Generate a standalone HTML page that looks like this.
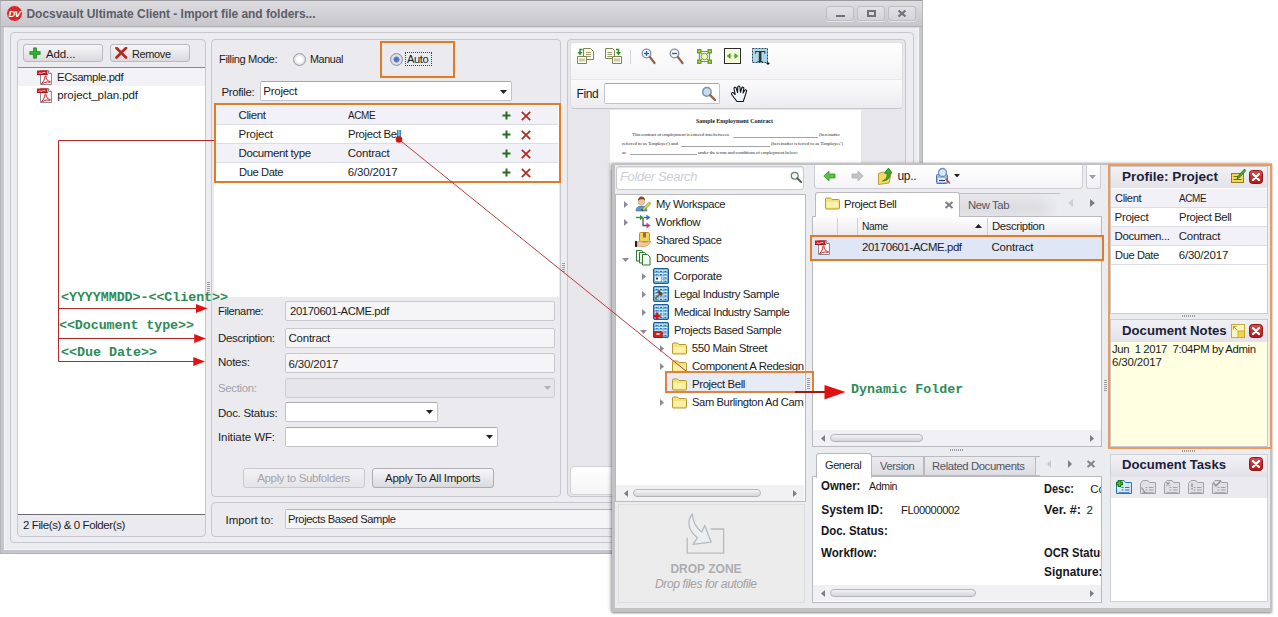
<!DOCTYPE html>
<html lang="en"><head><meta charset="utf-8"><title>Docsvault Ultimate Client - Import file and folders</title>
<style>
html,body{margin:0;padding:0}
body{width:1278px;height:617px;position:relative;overflow:hidden;background:#fff;font-family:'Liberation Sans',sans-serif;font-size:11px;color:#1c1c1c}
div,span.t,svg{position:absolute;box-sizing:border-box}
span.t{white-space:pre;display:block}

</style></head><body>
<div style="left:0px;top:0px;width:923px;height:553.5px;background:#c5c7cd;border:1px solid #b4b6bc;border-top-color:#9c9ca0;border-bottom-color:#b0b2b8"></div>
<div style="left:1px;top:1px;width:921px;height:26px;background:linear-gradient(#dedee2,#d3d3d7 45%,#c7c7cb);border-bottom:1px solid #b2b2b6"></div>
<div style="left:4px;top:27px;width:915px;height:523px;background:#ebecf0;border:1px solid #f6f6f8;border-top-color:#dcdce0"></div>
<svg style="left:6px;top:5px;" width="17" height="17" viewBox="0 0 17 17"><circle cx="8.500" cy="8.500" r="8" fill="#d32a2e" stroke="#f2d4d4" stroke-width="1"/><text x="8.300" y="12" font-family="Liberation Sans, sans-serif" font-size="9.500" font-weight="bold" font-style="italic" fill="#fff" text-anchor="middle" letter-spacing="-0.800">DV</text></svg>
<span class="t" style="left:26.5px;top:5px;height:18px;line-height:18px;font-size:12px;font-weight:bold;color:#5d5d6a;letter-spacing:-0.045px;">Docsvault Ultimate Client - Import file and folders...</span>
<div style="left:826px;top:6px;width:28px;height:15px;border:1px solid #bdbdc3;border-radius:3px;background:linear-gradient(#e2e2e6,#d3d3d8);box-shadow:0 1px 0 rgba(255,255,255,.5)"></div>
<div style="left:857px;top:6px;width:28px;height:15px;border:1px solid #bdbdc3;border-radius:3px;background:linear-gradient(#e2e2e6,#d3d3d8);box-shadow:0 1px 0 rgba(255,255,255,.5)"></div>
<div style="left:888px;top:6px;width:28px;height:15px;border:1px solid #bdbdc3;border-radius:3px;background:linear-gradient(#e2e2e6,#d3d3d8);box-shadow:0 1px 0 rgba(255,255,255,.5)"></div>
<div style="left:836px;top:15px;width:9px;height:2px;background:#70707a"></div>
<div style="left:867px;top:10px;width:9px;height:7px;border:2px solid #70707a"></div>
<svg style="left:897px;top:9px;" width="10" height="9" viewBox="0 0 10 9"><path d="M1.500 1.500L8.500 7.500M8.500 1.500L1.500 7.500" stroke="#70707a" stroke-width="2.200"/></svg>
<div style="left:10px;top:32px;width:904px;height:511px;border:1px solid #c6c8ce;border-radius:4px;background:#ededf1"></div>
<div style="left:17px;top:39px;width:189px;height:498px;border:1px solid #c6c8ce;border-radius:4px;background:#ebebef"></div>
<div style="left:23px;top:44px;width:80px;height:18px;border:1px solid #b9b9bf;border-radius:3px;background:linear-gradient(#f6f6f8,#e9e9ed 50%,#dadade)"></div>
<div style="left:110px;top:44px;width:80px;height:18px;border:1px solid #b9b9bf;border-radius:3px;background:linear-gradient(#f6f6f8,#e9e9ed 50%,#dadade)"></div>
<svg style="left:29px;top:47px;" width="12" height="12" viewBox="0 0 12 12"><path d="M6 0.500v11M0.500 6h11" stroke="#157a15" stroke-width="3.600"/><path d="M6 1.300v9.400M1.300 6h9.400" stroke="#2fb52f" stroke-width="2"/></svg>
<span class="t" style="left:46px;top:45.5px;height:16px;line-height:16px;font-size:11.5px;letter-spacing:-0.113px;">Add...</span>
<svg style="left:115px;top:47px;" width="13" height="12" viewBox="0 0 13 12"><path d="M1.500 1L11 10.500M11 1L1.500 10.500" stroke="#b52a20" stroke-width="2.700" stroke-linecap="round"/></svg>
<span class="t" style="left:132.4px;top:45.5px;height:16px;line-height:16px;font-size:11.5px;letter-spacing:-0.403px;transform:scaleX(0.9555);transform-origin:0 50%;">Remove</span>
<div style="left:18px;top:67px;width:187px;height:448px;background:#fff;border-top:1px solid #8a8a90;border-bottom:1px solid #6c6c72"></div>
<div style="left:18px;top:68px;width:187px;height:18px;background:#f3f3f7"></div>
<svg style="left:37px;top:69px;" width="16" height="17" viewBox="0 0 16 17"><path d="M3.5 1.5h8l3 3v11h-11z" fill="#fff" stroke="#8c8c90" stroke-width="1"/><path d="M11.5 1.5v3h3" fill="#e8e8ec" stroke="#8c8c90" stroke-width="1"/><rect x="0" y="1.500" width="10.500" height="4.500" fill="#d8151c"/><rect x="0" y="5" width="10.500" height="1" fill="#a80f14"/><path d="M1.5 4.5c1.5-1.5 2.5 0.5 4-0.5s2-0.5 3 0" stroke="#fff" stroke-width="0.8" fill="none"/><path d="M5 14c1.5-1.5 2.8-4 3-6.5c0.1-1 1-1 1 0c0 2.5 1.5 4.5 4 5c0.8 0.2 0.6 1-0.2 0.8c-2.5-0.6-5-0.4-7.300 1.300c-0.800 0.600-1.200 0-0.500-0.600z" fill="none" stroke="#d8151c" stroke-width="1"/></svg>
<svg style="left:37px;top:87px;" width="16" height="17" viewBox="0 0 16 17"><path d="M3.5 1.5h8l3 3v11h-11z" fill="#fff" stroke="#8c8c90" stroke-width="1"/><path d="M11.5 1.5v3h3" fill="#e8e8ec" stroke="#8c8c90" stroke-width="1"/><rect x="0" y="1.500" width="10.500" height="4.500" fill="#d8151c"/><rect x="0" y="5" width="10.500" height="1" fill="#a80f14"/><path d="M1.5 4.5c1.5-1.5 2.5 0.5 4-0.5s2-0.5 3 0" stroke="#fff" stroke-width="0.8" fill="none"/><path d="M5 14c1.5-1.5 2.8-4 3-6.5c0.1-1 1-1 1 0c0 2.5 1.5 4.5 4 5c0.8 0.2 0.6 1-0.2 0.8c-2.5-0.6-5-0.4-7.300 1.300c-0.800 0.600-1.200 0-0.500-0.600z" fill="none" stroke="#d8151c" stroke-width="1"/></svg>
<span class="t" style="left:57.3px;top:69px;height:16px;line-height:16px;font-size:11.5px;letter-spacing:-0.403px;transform:scaleX(0.9822);transform-origin:0 50%;">ECsample.pdf</span>
<span class="t" style="left:57.3px;top:87px;height:16px;line-height:16px;font-size:11.5px;letter-spacing:-0.076px;">project_plan.pdf</span>
<span class="t" style="left:23px;top:517px;height:16px;line-height:16px;font-size:11.5px;letter-spacing:-0.403px;">2 File(s) &amp; 0 Folder(s)</span>
<div style="left:207px;top:282px;width:3px;height:12px;background:repeating-linear-gradient(#9a9aa2 0 1px,transparent 1px 2px)"></div>
<div style="left:211px;top:39px;width:350px;height:458px;border:1px solid #c6c8ce;border-radius:4px;background:#ebebef"></div>
<span class="t" style="left:218.5px;top:51px;height:16px;line-height:16px;font-size:11.5px;letter-spacing:-0.403px;transform:scaleX(0.9690);transform-origin:0 50%;">Filling Mode:</span>
<div style="left:292.5px;top:52.5px;width:13px;height:13px;border-radius:50%;border:1.500px solid #9c9ca4;background:radial-gradient(circle,#fff 30%,#d2d2d8 80%)"></div>
<span class="t" style="left:309.8px;top:51px;height:16px;line-height:16px;font-size:11.5px;letter-spacing:-0.403px;transform:scaleX(0.9354);transform-origin:0 50%;">Manual</span>
<div style="left:380px;top:41px;width:75px;height:37px;border:2px solid #e07b26"></div>
<div style="left:389.5px;top:52.5px;width:13px;height:13px;border-radius:50%;border:1.500px solid #8c94aa;background:radial-gradient(circle,#4f70c4 0 1.800px,#7c94d2 2.800px,#e6eaf5 3.500px,#d2d7e4 5px)"></div>
<div style="left:405px;top:52px;width:27px;height:14px;border:1px dotted #404040"></div>
<span class="t" style="left:407.3px;top:51px;height:16px;line-height:16px;font-size:11.5px;letter-spacing:-0.403px;transform:scaleX(0.9704);transform-origin:0 50%;">Auto</span>
<span class="t" style="left:221.4px;top:83.5px;height:16px;line-height:16px;font-size:11.5px;letter-spacing:-0.342px;">Profile:</span>
<div style="left:260px;top:81px;width:252px;height:20px;background:#fff;border:1px solid #c3c3c9;border-top-color:#a6a6ae;border-radius:2px"></div>
<span class="t" style="left:263.3px;top:83px;height:16px;line-height:16px;font-size:11.5px;letter-spacing:-0.266px;">Project</span>
<svg style="left:499.5px;top:89.5px;" width="7" height="4" viewBox="0 0 7 4"><path d="M0 0H7L3.5 4z" fill="#202020"/></svg>
<div style="left:214px;top:103px;width:345px;height:194px;background:#fff"></div>
<div style="left:216px;top:106px;width:342px;height:19px;background:#f3f1f8;border-bottom:1px solid #dcdce6"></div>
<span class="t" style="left:238.5px;top:106.8px;height:16px;line-height:16px;font-size:11.5px;letter-spacing:-0.401px;">Client</span>
<span class="t" style="left:347.7px;top:106.8px;height:16px;line-height:16px;font-size:11.5px;letter-spacing:-0.403px;transform:scaleX(0.8618);transform-origin:0 50%;">ACME</span>
<svg style="left:502.0px;top:111.0px;" width="9" height="9" viewBox="0 0 9 9"><path d="M4.5 0.500V8.5M0.500 4.5H8.5" stroke="#24701a" stroke-width="2"/></svg>
<svg style="left:521.0px;top:110.8px;" width="10" height="10" viewBox="0 0 10 10"><path d="M0.800 0.800L9.2 9.2M9.2 0.800L0.800 9.2" stroke="#b02a1c" stroke-width="1.700"/></svg>
<div style="left:216px;top:125px;width:342px;height:19px;background:#fff;border-bottom:1px solid #dcdce6"></div>
<span class="t" style="left:238.5px;top:125.8px;height:16px;line-height:16px;font-size:11.5px;letter-spacing:-0.233px;">Project</span>
<span class="t" style="left:347.7px;top:125.8px;height:16px;line-height:16px;font-size:11.5px;letter-spacing:-0.403px;transform:scaleX(0.9917);transform-origin:0 50%;">Project Bell</span>
<svg style="left:502.0px;top:130.0px;" width="9" height="9" viewBox="0 0 9 9"><path d="M4.5 0.500V8.5M0.500 4.5H8.5" stroke="#24701a" stroke-width="2"/></svg>
<svg style="left:521.0px;top:129.8px;" width="10" height="10" viewBox="0 0 10 10"><path d="M0.800 0.800L9.2 9.2M9.2 0.800L0.800 9.2" stroke="#b02a1c" stroke-width="1.700"/></svg>
<div style="left:216px;top:144px;width:342px;height:19px;background:#f3f1f8;border-bottom:1px solid #dcdce6"></div>
<span class="t" style="left:238.5px;top:144.8px;height:16px;line-height:16px;font-size:11.5px;letter-spacing:-0.397px;">Document type</span>
<span class="t" style="left:347.7px;top:144.8px;height:16px;line-height:16px;font-size:11.5px;letter-spacing:-0.210px;">Contract</span>
<svg style="left:502.0px;top:149.0px;" width="9" height="9" viewBox="0 0 9 9"><path d="M4.5 0.500V8.5M0.500 4.5H8.5" stroke="#24701a" stroke-width="2"/></svg>
<svg style="left:521.0px;top:148.8px;" width="10" height="10" viewBox="0 0 10 10"><path d="M0.800 0.800L9.2 9.2M9.2 0.800L0.800 9.2" stroke="#b02a1c" stroke-width="1.700"/></svg>
<div style="left:216px;top:163px;width:342px;height:19px;background:#fff;border-bottom:1px solid #dcdce6"></div>
<span class="t" style="left:238.5px;top:163.8px;height:16px;line-height:16px;font-size:11.5px;letter-spacing:-0.403px;transform:scaleX(0.9721);transform-origin:0 50%;">Due Date</span>
<span class="t" style="left:347.7px;top:163.8px;height:16px;line-height:16px;font-size:11.5px;letter-spacing:-0.146px;">6/30/2017</span>
<svg style="left:502.0px;top:168.0px;" width="9" height="9" viewBox="0 0 9 9"><path d="M4.5 0.500V8.5M0.500 4.5H8.5" stroke="#24701a" stroke-width="2"/></svg>
<svg style="left:521.0px;top:167.8px;" width="10" height="10" viewBox="0 0 10 10"><path d="M0.800 0.800L9.2 9.2M9.2 0.800L0.800 9.2" stroke="#b02a1c" stroke-width="1.700"/></svg>
<div style="left:214px;top:103px;width:347px;height:80px;border:2px solid #e07b26"></div>
<div style="left:562px;top:263px;width:3px;height:10px;background:repeating-linear-gradient(#9a9aa2 0 1px,transparent 1px 2px)"></div>
<span class="t" style="left:218px;top:303px;height:16px;line-height:16px;font-size:11.5px;letter-spacing:-0.403px;transform:scaleX(0.9645);transform-origin:0 50%;">Filename:</span>
<div style="left:285px;top:301px;width:270px;height:20px;background:#f5f5f7;border:1px solid #c8c8ce;border-radius:2px"></div>
<span class="t" style="left:289.5px;top:303px;height:16px;line-height:16px;font-size:11.5px;letter-spacing:-0.403px;transform:scaleX(0.9835);transform-origin:0 50%;">20170601-ACME.pdf</span>
<span class="t" style="left:218px;top:330px;height:16px;line-height:16px;font-size:11.5px;letter-spacing:-0.338px;">Description:</span>
<div style="left:285px;top:328px;width:270px;height:20px;background:#f5f5f7;border:1px solid #c8c8ce;border-radius:2px"></div>
<span class="t" style="left:288.5px;top:330px;height:16px;line-height:16px;font-size:11.5px;letter-spacing:-0.238px;">Contract</span>
<span class="t" style="left:218px;top:354px;height:16px;line-height:16px;font-size:11.5px;letter-spacing:-0.270px;">Notes:</span>
<div style="left:285px;top:353px;width:270px;height:20px;background:#f5f5f7;border:1px solid #c8c8ce;border-radius:2px"></div>
<span class="t" style="left:288.5px;top:355.5px;height:16px;line-height:16px;font-size:11.5px;letter-spacing:-0.146px;">6/30/2017</span>
<span class="t" style="left:218px;top:380px;height:16px;line-height:16px;font-size:11.5px;color:#a2a2aa;letter-spacing:-0.380px;">Section:</span>
<div style="left:285px;top:378px;width:270px;height:20px;background:#e6e6ea;border:1px solid #cdcdd3;border-radius:2px"></div>
<svg style="left:543.5px;top:386.0px;" width="7" height="4" viewBox="0 0 7 4"><path d="M0 0H7L3.5 4z" fill="#b0b0b8"/></svg>
<span class="t" style="left:218px;top:405px;height:16px;line-height:16px;font-size:11.5px;letter-spacing:-0.276px;">Doc. Status:</span>
<div style="left:285px;top:402px;width:153px;height:20px;background:#fff;border:1px solid #c3c3c9;border-top-color:#a9a9b1;border-radius:2px"></div>
<svg style="left:425.5px;top:410.0px;" width="7" height="4" viewBox="0 0 7 4"><path d="M0 0H7L3.5 4z" fill="#202020"/></svg>
<span class="t" style="left:218px;top:429px;height:16px;line-height:16px;font-size:11.5px;letter-spacing:-0.105px;">Initiate WF:</span>
<div style="left:285px;top:427px;width:213px;height:20px;background:#fff;border:1px solid #c3c3c9;border-top-color:#a9a9b1;border-radius:2px"></div>
<svg style="left:485.5px;top:434.5px;" width="7" height="4" viewBox="0 0 7 4"><path d="M0 0H7L3.5 4z" fill="#202020"/></svg>
<div style="left:243px;top:468px;width:122px;height:20px;border:1px solid #c9c9cf;border-radius:3px;background:linear-gradient(#f2f2f4,#e4e4e8)"></div>
<span class="t" style="left:257.3px;top:470px;height:16px;line-height:16px;font-size:11.5px;color:#a4a4ac;letter-spacing:-0.374px;">Apply to Subfolders</span>
<div style="left:372px;top:468px;width:122px;height:20px;border:1px solid #adadb5;border-radius:3px;background:linear-gradient(#f6f6f8,#e9e9ed 50%,#dadade)"></div>
<span class="t" style="left:385px;top:470px;height:16px;line-height:16px;font-size:11.5px;letter-spacing:-0.278px;">Apply To All Imports</span>
<div style="left:211px;top:502px;width:696px;height:35px;border:1px solid #c6c8ce;border-radius:4px;background:#ebebef"></div>
<span class="t" style="left:225.5px;top:512px;height:16px;line-height:16px;font-size:11.5px;letter-spacing:-0.064px;">Import to:</span>
<div style="left:285px;top:509px;width:400px;height:20px;background:#f5f5f7;border:1px solid #c6c6cc;border-top-color:#b4b4ba;border-radius:2px"></div>
<span class="t" style="left:288px;top:511px;height:16px;line-height:16px;font-size:11.5px;letter-spacing:-0.403px;transform:scaleX(0.9686);transform-origin:0 50%;">Projects Based Sample</span>
<div style="left:567px;top:39px;width:339px;height:458px;border:1px solid #c6c8ce;border-radius:4px;background:#e7e7eb"></div>
<div style="left:570px;top:42px;width:333px;height:67px;border:1px solid #dedee3;border-bottom-color:#c6c6cc;border-radius:4px;background:linear-gradient(#fff,#f3f3f6 54%,#fbfbfc 57%,#ececf0)"></div>
<div style="left:571px;top:79px;width:331px;height:1px;background:#e6e6ea"></div>
<span class="t" style="left:576.5px;top:84.5px;height:18px;line-height:18px;font-size:12px;letter-spacing:-0.420px;">Find</span>
<div style="left:604px;top:83px;width:116px;height:21px;background:#fff;border:1px solid #c3c3c9;border-top-color:#a6a6ae;border-radius:2px"></div>
<svg style="left:701.0px;top:86.0px;" width="15" height="15" viewBox="0 0 14 14"><circle cx="5.500" cy="5.500" r="4" fill="#c8def0" stroke="#7c92aa" stroke-width="1.400"/><path d="M8.500 8.500L13 13" stroke="#a0604a" stroke-width="2.200" stroke-linecap="round"/></svg>
<div style="left:570px;top:465.5px;width:333px;height:29.5px;border:1px solid #d2d2d8;border-radius:4px;background:linear-gradient(#fff,#f4f4f6)"></div>
<div style="left:610px;top:110px;width:251px;height:60px;background:#fff"></div>
<span class="t" style="left:696px;top:116.5px;height:9px;line-height:9px;font-size:6px;font-weight:bold;font-family:'Liberation Serif', serif;letter-spacing:-0.040px;">Sample Employment Contract</span>
<span class="t" style="left:632px;top:131px;height:8px;line-height:8px;font-size:5px;color:#303030;font-family:'Liberation Serif', serif;letter-spacing:-0.168px;">This contract of employment is entered into between</span>
<div style="left:733px;top:137px;width:85px;height:1px;background:#a4a4a4"></div>
<span class="t" style="left:819px;top:131px;height:8px;line-height:8px;font-size:5px;color:#303030;font-family:'Liberation Serif', serif;letter-spacing:-0.175px;transform:scaleX(0.9812);transform-origin:0 50%;">(hereinafter</span>
<span class="t" style="left:622px;top:140px;height:8px;line-height:8px;font-size:5px;color:#303030;font-family:'Liberation Serif', serif;letter-spacing:-0.113px;">referred to as &#x27;Employer&#x27;) and</span>
<div style="left:681px;top:146px;width:89px;height:1px;background:#a4a4a4"></div>
<span class="t" style="left:771px;top:140px;height:8px;line-height:8px;font-size:5px;color:#303030;font-family:'Liberation Serif', serif;letter-spacing:-0.104px;">(hereinafter referred to as &#x27;Employee&#x27;)</span>
<span class="t" style="left:622px;top:148.5px;height:8px;line-height:8px;font-size:5px;color:#303030;font-family:'Liberation Serif', serif;letter-spacing:-0.172px;">as</span>
<div style="left:630px;top:154px;width:67px;height:1px;background:#a4a4a4"></div>
<span class="t" style="left:698px;top:148.5px;height:8px;line-height:8px;font-size:5px;color:#303030;font-family:'Liberation Serif', serif;letter-spacing:-0.163px;">under the terms and conditions of employment below:</span>
<svg style="left:577px;top:48px;" width="17" height="16" viewBox="0 0 17 16"><path d="M6.500 0.500h7l3 3v8h-10z" fill="#fbfbf0" stroke="#84844c" stroke-width="1"/><path d="M9 4.500h5M9 6.500h5M9 8.500h5" stroke="#84844c" stroke-width="0.800"/><path d="M0.500 8.500h9v7h-9z" fill="#fbfbf0" stroke="#84844c" stroke-width="1"/><path d="M3 10.500v3M5 10.500v3M7 10.500v3" stroke="#84844c" stroke-width="0.800"/><path d="M5.500 1.500H3v3" fill="none" stroke="#2f8c2f" stroke-width="1.500"/><path d="M0.500 4L3 7.500 5.500 4z" fill="#2f8c2f"/></svg>
<svg style="left:605px;top:48px;" width="17" height="16" viewBox="0 0 17 16"><path d="M0.500 0.500h7l2 2v8h-9z" fill="#fbfbf0" stroke="#84844c" stroke-width="1"/><path d="M2.500 4.500h4.500M2.500 6.500h4.500M2.500 8.500h4.500" stroke="#84844c" stroke-width="0.800"/><path d="M7.500 8.500h9v7h-9z" fill="#fbfbf0" stroke="#84844c" stroke-width="1"/><path d="M10 10.500v3M12 10.500v3M14 10.500v3" stroke="#84844c" stroke-width="0.800"/><path d="M11 1.500h2.500v3" fill="none" stroke="#2f8c2f" stroke-width="1.500"/><path d="M11 4L13.500 7.500 16 4z" fill="#2f8c2f"/></svg>
<div style="left:630px;top:50px;width:1px;height:14px;background:#d2d2d8"></div>
<svg style="left:640.8px;top:48px;" width="16" height="17" viewBox="0 0 16 17"><circle cx="5.500" cy="5.500" r="4.300" fill="#f3f7fb" stroke="#7d8ea6" stroke-width="1.300"/><path d="M3 5.500h5" stroke="#2d5fa8" stroke-width="1.300"/><path d="M5.500 3v5" stroke="#2d5fa8" stroke-width="1.300"/><path d="M8.800 8.800L13.500 15" stroke="#9a5c46" stroke-width="2.200" stroke-linecap="round"/></svg>
<svg style="left:669.2px;top:48px;" width="16" height="17" viewBox="0 0 16 17"><circle cx="5.500" cy="5.500" r="4.300" fill="#f3f7fb" stroke="#7d8ea6" stroke-width="1.300"/><path d="M3 5.500h5" stroke="#2d5fa8" stroke-width="1.300"/><path d="M8.800 8.800L13.500 15" stroke="#9a5c46" stroke-width="2.200" stroke-linecap="round"/></svg>
<svg style="left:697px;top:49px;" width="15" height="15" viewBox="0 0 15 15"><path d="M2.500 2.500h10v10h-10z" fill="none" stroke="#6ba31f" stroke-width="1.200"/><path d="M2.500 2.500l10 10M12.500 2.500l-10 10" stroke="#6ba31f" stroke-width="1"/><circle cx="7.500" cy="7.500" r="3.200" fill="#f4f6c8" stroke="#6ba31f" stroke-width="1"/><path d="M0 0h4.500v4.500h-4.500zM10.500 0h4.500v4.500h-4.500zM0 10.500h4.500v4.500h-4.500zM10.500 10.500h4.500v4.500h-4.500z" fill="#6ba31f"/><path d="M1.500 1.500h1.500v1.500h-1.500zM12 1.500h1.500v1.500h-1.500zM1.500 12h1.500v1.500h-1.500zM12 12h1.500v1.500h-1.500z" fill="#c8e08c"/></svg>
<svg style="left:723.5px;top:48px;" width="17" height="16" viewBox="0 0 17 16"><rect x="0.500" y="0.500" width="16" height="15" fill="#f6fbe0" stroke="#2c2c2c" stroke-width="1"/><path d="M2.500 8L6.500 5v6zM14.500 8L10.500 5v6z" fill="#4fa81f"/><path d="M6 8h1.500M9.500 8H11" stroke="#4fa81f" stroke-width="1.200"/></svg>
<svg style="left:751.5px;top:48px;" width="18" height="17" viewBox="0 0 18 17"><rect x="0.500" y="0.500" width="15" height="14" fill="#a9d9ee" stroke="#2c4658" stroke-width="1" stroke-dasharray="2 1"/><text x="8" y="13.500" text-anchor="middle" font-family="Liberation Serif, serif" font-weight="bold" font-size="16" fill="#1f3446">T</text><path d="M14.500 15.500h3M16 14v3" stroke="#101010" stroke-width="1"/></svg>
<svg style="left:730px;top:85px;" width="18" height="18" viewBox="0 0 18 18"><path d="M7 16.500L2 10C0.800 8.500 2 7 3.500 7.800L5.200 9.500 4 4C3.700 2 5.800 1.800 6.200 3.200L7.600 7.500 7.700 2.200C7.800 0.600 9.800 0.600 10 2.200L10.400 7.300 11.800 3C12.300 1.600 14.100 2.200 13.800 3.600L13 8 14.800 5.200C15.500 4.200 17 5 16.500 6.300C15.500 9.500 14.500 13 13.200 16.500Z" fill="#eef4fa" stroke="#101018" stroke-width="1.100" stroke-linejoin="round"/></svg>
<div style="left:612px;top:163px;width:660px;height:449px;background:#ebecf0;border-style:solid;border-color:#c2c2c5;border-width:2px 2px 4px 3px;box-shadow:0 1px 2px rgba(0,0,0,.4),-2px 0 3px rgba(0,0,0,.22)"></div>
<div style="left:616px;top:166px;width:188px;height:24px;background:#fff;border:1px solid #c8c8ce;border-radius:3px;box-shadow:inset 0 1px 1px #e8e8ec"></div>
<span class="t" style="left:620px;top:166.5px;height:20px;line-height:20px;font-size:13px;color:#cdcdd5;font-style:italic;letter-spacing:-0.346px;">Folder Search</span>
<svg style="left:790.0px;top:171.0px;" width="12" height="12" viewBox="0 0 14 14"><circle cx="5.500" cy="5.500" r="4" fill="#f4f8f4" stroke="#6c7c74" stroke-width="1.400"/><path d="M8.500 8.500L13 13" stroke="#4c5c54" stroke-width="2.200" stroke-linecap="round"/></svg>
<div style="left:615px;top:194px;width:191px;height:308px;background:#fff;border:1px solid #b9b9bf"></div>
<div style="left:616px;top:195px;width:188px;height:290px;overflow:hidden">
<svg style="left:7.5px;top:5.5px;" width="4" height="7" viewBox="0 0 4 7"><path d="M0 0V7L4 3.5z" fill="#8c8c94"/></svg>
<svg style="left:19px;top:1px;" width="16" height="16" viewBox="0 0 16 16"><path d="M1 15c0-3.500 2-5 5.500-5s5.500 1.500 5.500 5z" fill="#5c96cc" stroke="#3c6ea4" stroke-width="0.600"/><circle cx="6.500" cy="5.500" r="3.300" fill="#f0c49c" stroke="#b88c64" stroke-width="0.500"/><path d="M3 5c0-3 1.500-4.500 3.500-4.500s3.500 1.500 3.500 4c-1.500-1.500-4.500-2-7 0.500z" fill="#7a4a24"/><path d="M7 15l1-3 6.500-6 1.500 1.500-6.500 6.500z" fill="#e8d054" stroke="#6c8a2c" stroke-width="0.700"/><path d="M6.500 13l1.500 2" stroke="#202020" stroke-width="0.800"/></svg>
<span class="t" style="left:39.60000000000002px;top:1px;height:16px;line-height:16px;font-size:11.5px;letter-spacing:-0.403px;transform:scaleX(0.9746);transform-origin:0 50%;">My Workspace</span>
<svg style="left:7.5px;top:23.5px;" width="4" height="7" viewBox="0 0 4 7"><path d="M0 0V7L4 3.5z" fill="#8c8c94"/></svg>
<svg style="left:19px;top:19px;" width="16" height="16" viewBox="0 0 16 16"><path d="M1 3.500h6" stroke="#2c9a3c" stroke-width="1.400"/><path d="M5 0.800L8.500 3.500 5 6.200z" fill="#2c9a3c"/><path d="M8.500 3.500h4" stroke="#2c6cc4" stroke-width="1.400"/><path d="M11.500 0.800L15.500 3.500 11.500 6.200z" fill="#2c6cc4"/><path d="M8 4v7.500h4" stroke="#5c4c5c" stroke-width="1.300" fill="none"/><path d="M11.500 8.500L15.500 11.500 11.500 14.500z" fill="#c43c8c"/></svg>
<span class="t" style="left:39.60000000000002px;top:19px;height:16px;line-height:16px;font-size:11.5px;letter-spacing:-0.297px;">Workflow</span>
<svg style="left:19px;top:37px;" width="16" height="16" viewBox="0 0 16 16"><rect x="4.500" y="0.500" width="10" height="9" rx="1" fill="#f2d45c" stroke="#b8942c"/><rect x="8" y="0.500" width="3" height="5" fill="#a8643c"/><path d="M2 10c3-1.500 5 0 7 0.500s4-1.500 6.500-1c0.500 1.500-3 4.500-6 5s-5.500-0.500-7.500-0.500z" fill="#f4c896" stroke="#c48c54" stroke-width="0.700"/><rect x="0" y="9" width="2" height="6" fill="#202020"/></svg>
<span class="t" style="left:39.60000000000002px;top:37px;height:16px;line-height:16px;font-size:11.5px;letter-spacing:-0.403px;transform:scaleX(0.9611);transform-origin:0 50%;">Shared Space</span>
<svg style="left:5.5px;top:63.0px;" width="7" height="4" viewBox="0 0 7 4"><path d="M0 0H7L3.5 4z" fill="#8c8c94"/></svg>
<svg style="left:19px;top:55px;" width="16" height="16" viewBox="0 0 16 16"><path d="M1.500 0.500h5l2.500 2.500v8h-7.500z" fill="#eef6ea" stroke="#2c7a34"/><path d="M4.500 2.500h5l2.500 2.500v8h-7.500z" fill="#eef6ea" stroke="#2c7a34"/><path d="M7.500 4.500h5l2.500 2.500v8h-7.500z" fill="#f4faf0" stroke="#2c7a34"/></svg>
<span class="t" style="left:39.60000000000002px;top:55px;height:16px;line-height:16px;font-size:11.5px;letter-spacing:-0.403px;transform:scaleX(0.9645);transform-origin:0 50%;">Documents</span>
<svg style="left:25.5px;top:77.5px;" width="4" height="7" viewBox="0 0 4 7"><path d="M0 0V7L4 3.5z" fill="#8c8c94"/></svg>
<svg style="left:37px;top:73px;" width="16" height="16" viewBox="0 0 16 16"><rect x="0.500" y="0.500" width="15" height="15" rx="1.800" fill="#3f8ccc" stroke="#205c98" stroke-width="1.100"/><rect x="1.6" y="1.7" width="4" height="2.800" fill="#a4d8f4"/><rect x="1.6" y="1.7" width="4" height="0.900" fill="#e2f4fc"/><rect x="2.6" y="2.9" width="2" height="1" fill="#1a5a9a"/><rect x="6.0" y="1.7" width="4" height="2.800" fill="#a4d8f4"/><rect x="6.0" y="1.7" width="4" height="0.900" fill="#e2f4fc"/><rect x="7.0" y="2.9" width="2" height="1" fill="#1a5a9a"/><rect x="10.4" y="1.7" width="4" height="2.800" fill="#a4d8f4"/><rect x="10.4" y="1.7" width="4" height="0.900" fill="#e2f4fc"/><rect x="11.4" y="2.9" width="2" height="1" fill="#1a5a9a"/><rect x="1.6" y="5.0" width="4" height="2.800" fill="#a4d8f4"/><rect x="1.6" y="5.0" width="4" height="0.900" fill="#e2f4fc"/><rect x="2.6" y="6.2" width="2" height="1" fill="#1a5a9a"/><rect x="6.0" y="5.0" width="4" height="2.800" fill="#a4d8f4"/><rect x="6.0" y="5.0" width="4" height="0.900" fill="#e2f4fc"/><rect x="7.0" y="6.2" width="2" height="1" fill="#1a5a9a"/><rect x="10.4" y="5.0" width="4" height="2.800" fill="#a4d8f4"/><rect x="10.4" y="5.0" width="4" height="0.900" fill="#e2f4fc"/><rect x="11.4" y="6.2" width="2" height="1" fill="#1a5a9a"/><rect x="1.6" y="8.3" width="4" height="2.800" fill="#a4d8f4"/><rect x="1.6" y="8.3" width="4" height="0.900" fill="#e2f4fc"/><rect x="2.6" y="9.5" width="2" height="1" fill="#1a5a9a"/><rect x="6.0" y="8.3" width="4" height="2.800" fill="#a4d8f4"/><rect x="6.0" y="8.3" width="4" height="0.900" fill="#e2f4fc"/><rect x="7.0" y="9.5" width="2" height="1" fill="#1a5a9a"/><rect x="10.4" y="8.3" width="4" height="2.800" fill="#a4d8f4"/><rect x="10.4" y="8.3" width="4" height="0.900" fill="#e2f4fc"/><rect x="11.4" y="9.5" width="2" height="1" fill="#1a5a9a"/><rect x="1.6" y="11.6" width="4" height="2.800" fill="#a4d8f4"/><rect x="1.6" y="11.6" width="4" height="0.900" fill="#e2f4fc"/><rect x="2.6" y="12.8" width="2" height="1" fill="#1a5a9a"/><rect x="6.0" y="11.6" width="4" height="2.800" fill="#a4d8f4"/><rect x="6.0" y="11.6" width="4" height="0.900" fill="#e2f4fc"/><rect x="7.0" y="12.8" width="2" height="1" fill="#1a5a9a"/><rect x="10.4" y="11.6" width="4" height="2.800" fill="#a4d8f4"/><rect x="10.4" y="11.6" width="4" height="0.900" fill="#e2f4fc"/><rect x="11.4" y="12.8" width="2" height="1" fill="#1a5a9a"/><rect x="1.500" y="8" width="7" height="5.500" fill="#f4f8fc" stroke="#6c9cc8" stroke-width="0.600"/><rect x="3" y="9.500" width="2" height="2" fill="#4c3c3c"/></svg>
<span class="t" style="left:57.60000000000002px;top:73px;height:16px;line-height:16px;font-size:11.5px;letter-spacing:-0.330px;">Corporate</span>
<svg style="left:25.5px;top:95.5px;" width="4" height="7" viewBox="0 0 4 7"><path d="M0 0V7L4 3.5z" fill="#8c8c94"/></svg>
<svg style="left:37px;top:91px;" width="16" height="16" viewBox="0 0 16 16"><rect x="0.500" y="0.500" width="15" height="15" rx="1.800" fill="#3f8ccc" stroke="#205c98" stroke-width="1.100"/><rect x="1.6" y="1.7" width="4" height="2.800" fill="#a4d8f4"/><rect x="1.6" y="1.7" width="4" height="0.900" fill="#e2f4fc"/><rect x="2.6" y="2.9" width="2" height="1" fill="#1a5a9a"/><rect x="6.0" y="1.7" width="4" height="2.800" fill="#a4d8f4"/><rect x="6.0" y="1.7" width="4" height="0.900" fill="#e2f4fc"/><rect x="7.0" y="2.9" width="2" height="1" fill="#1a5a9a"/><rect x="10.4" y="1.7" width="4" height="2.800" fill="#a4d8f4"/><rect x="10.4" y="1.7" width="4" height="0.900" fill="#e2f4fc"/><rect x="11.4" y="2.9" width="2" height="1" fill="#1a5a9a"/><rect x="1.6" y="5.0" width="4" height="2.800" fill="#a4d8f4"/><rect x="1.6" y="5.0" width="4" height="0.900" fill="#e2f4fc"/><rect x="2.6" y="6.2" width="2" height="1" fill="#1a5a9a"/><rect x="6.0" y="5.0" width="4" height="2.800" fill="#a4d8f4"/><rect x="6.0" y="5.0" width="4" height="0.900" fill="#e2f4fc"/><rect x="7.0" y="6.2" width="2" height="1" fill="#1a5a9a"/><rect x="10.4" y="5.0" width="4" height="2.800" fill="#a4d8f4"/><rect x="10.4" y="5.0" width="4" height="0.900" fill="#e2f4fc"/><rect x="11.4" y="6.2" width="2" height="1" fill="#1a5a9a"/><rect x="1.6" y="8.3" width="4" height="2.800" fill="#a4d8f4"/><rect x="1.6" y="8.3" width="4" height="0.900" fill="#e2f4fc"/><rect x="2.6" y="9.5" width="2" height="1" fill="#1a5a9a"/><rect x="6.0" y="8.3" width="4" height="2.800" fill="#a4d8f4"/><rect x="6.0" y="8.3" width="4" height="0.900" fill="#e2f4fc"/><rect x="7.0" y="9.5" width="2" height="1" fill="#1a5a9a"/><rect x="10.4" y="8.3" width="4" height="2.800" fill="#a4d8f4"/><rect x="10.4" y="8.3" width="4" height="0.900" fill="#e2f4fc"/><rect x="11.4" y="9.5" width="2" height="1" fill="#1a5a9a"/><rect x="1.6" y="11.6" width="4" height="2.800" fill="#a4d8f4"/><rect x="1.6" y="11.6" width="4" height="0.900" fill="#e2f4fc"/><rect x="2.6" y="12.8" width="2" height="1" fill="#1a5a9a"/><rect x="6.0" y="11.6" width="4" height="2.800" fill="#a4d8f4"/><rect x="6.0" y="11.6" width="4" height="0.900" fill="#e2f4fc"/><rect x="7.0" y="12.8" width="2" height="1" fill="#1a5a9a"/><rect x="10.4" y="11.6" width="4" height="2.800" fill="#a4d8f4"/><rect x="10.4" y="11.6" width="4" height="0.900" fill="#e2f4fc"/><rect x="11.4" y="12.8" width="2" height="1" fill="#1a5a9a"/><path d="M2 13l5-5" stroke="#8c5c2c" stroke-width="1.600"/><path d="M5 5l4 4" stroke="#6c4424" stroke-width="2.600"/></svg>
<span class="t" style="left:57.60000000000002px;top:91px;height:16px;line-height:16px;font-size:11.5px;letter-spacing:-0.403px;transform:scaleX(0.9917);transform-origin:0 50%;">Legal Industry Sample</span>
<svg style="left:25.5px;top:113.5px;" width="4" height="7" viewBox="0 0 4 7"><path d="M0 0V7L4 3.5z" fill="#8c8c94"/></svg>
<svg style="left:37px;top:109px;" width="16" height="16" viewBox="0 0 16 16"><rect x="0.500" y="0.500" width="15" height="15" rx="1.800" fill="#3f8ccc" stroke="#205c98" stroke-width="1.100"/><rect x="1.6" y="1.7" width="4" height="2.800" fill="#a4d8f4"/><rect x="1.6" y="1.7" width="4" height="0.900" fill="#e2f4fc"/><rect x="2.6" y="2.9" width="2" height="1" fill="#1a5a9a"/><rect x="6.0" y="1.7" width="4" height="2.800" fill="#a4d8f4"/><rect x="6.0" y="1.7" width="4" height="0.900" fill="#e2f4fc"/><rect x="7.0" y="2.9" width="2" height="1" fill="#1a5a9a"/><rect x="10.4" y="1.7" width="4" height="2.800" fill="#a4d8f4"/><rect x="10.4" y="1.7" width="4" height="0.900" fill="#e2f4fc"/><rect x="11.4" y="2.9" width="2" height="1" fill="#1a5a9a"/><rect x="1.6" y="5.0" width="4" height="2.800" fill="#a4d8f4"/><rect x="1.6" y="5.0" width="4" height="0.900" fill="#e2f4fc"/><rect x="2.6" y="6.2" width="2" height="1" fill="#1a5a9a"/><rect x="6.0" y="5.0" width="4" height="2.800" fill="#a4d8f4"/><rect x="6.0" y="5.0" width="4" height="0.900" fill="#e2f4fc"/><rect x="7.0" y="6.2" width="2" height="1" fill="#1a5a9a"/><rect x="10.4" y="5.0" width="4" height="2.800" fill="#a4d8f4"/><rect x="10.4" y="5.0" width="4" height="0.900" fill="#e2f4fc"/><rect x="11.4" y="6.2" width="2" height="1" fill="#1a5a9a"/><rect x="1.6" y="8.3" width="4" height="2.800" fill="#a4d8f4"/><rect x="1.6" y="8.3" width="4" height="0.900" fill="#e2f4fc"/><rect x="2.6" y="9.5" width="2" height="1" fill="#1a5a9a"/><rect x="6.0" y="8.3" width="4" height="2.800" fill="#a4d8f4"/><rect x="6.0" y="8.3" width="4" height="0.900" fill="#e2f4fc"/><rect x="7.0" y="9.5" width="2" height="1" fill="#1a5a9a"/><rect x="10.4" y="8.3" width="4" height="2.800" fill="#a4d8f4"/><rect x="10.4" y="8.3" width="4" height="0.900" fill="#e2f4fc"/><rect x="11.4" y="9.5" width="2" height="1" fill="#1a5a9a"/><rect x="1.6" y="11.6" width="4" height="2.800" fill="#a4d8f4"/><rect x="1.6" y="11.6" width="4" height="0.900" fill="#e2f4fc"/><rect x="2.6" y="12.8" width="2" height="1" fill="#1a5a9a"/><rect x="6.0" y="11.6" width="4" height="2.800" fill="#a4d8f4"/><rect x="6.0" y="11.6" width="4" height="0.900" fill="#e2f4fc"/><rect x="7.0" y="12.8" width="2" height="1" fill="#1a5a9a"/><rect x="10.4" y="11.6" width="4" height="2.800" fill="#a4d8f4"/><rect x="10.4" y="11.6" width="4" height="0.900" fill="#e2f4fc"/><rect x="11.4" y="12.8" width="2" height="1" fill="#1a5a9a"/><path d="M4 8.500v7M0.500 12h7" stroke="#d4141c" stroke-width="2.400"/></svg>
<span class="t" style="left:57.60000000000002px;top:109px;height:16px;line-height:16px;font-size:11.5px;letter-spacing:-0.403px;transform:scaleX(0.9900);transform-origin:0 50%;">Medical Industry Sample</span>
<svg style="left:23.5px;top:135.0px;" width="7" height="4" viewBox="0 0 7 4"><path d="M0 0H7L3.5 4z" fill="#8c8c94"/></svg>
<svg style="left:37px;top:127px;" width="16" height="16" viewBox="0 0 16 16"><rect x="0.500" y="0.500" width="15" height="15" rx="1.800" fill="#3f8ccc" stroke="#205c98" stroke-width="1.100"/><rect x="1.6" y="1.7" width="4" height="2.800" fill="#a4d8f4"/><rect x="1.6" y="1.7" width="4" height="0.900" fill="#e2f4fc"/><rect x="2.6" y="2.9" width="2" height="1" fill="#1a5a9a"/><rect x="6.0" y="1.7" width="4" height="2.800" fill="#a4d8f4"/><rect x="6.0" y="1.7" width="4" height="0.900" fill="#e2f4fc"/><rect x="7.0" y="2.9" width="2" height="1" fill="#1a5a9a"/><rect x="10.4" y="1.7" width="4" height="2.800" fill="#a4d8f4"/><rect x="10.4" y="1.7" width="4" height="0.900" fill="#e2f4fc"/><rect x="11.4" y="2.9" width="2" height="1" fill="#1a5a9a"/><rect x="1.6" y="5.0" width="4" height="2.800" fill="#a4d8f4"/><rect x="1.6" y="5.0" width="4" height="0.900" fill="#e2f4fc"/><rect x="2.6" y="6.2" width="2" height="1" fill="#1a5a9a"/><rect x="6.0" y="5.0" width="4" height="2.800" fill="#a4d8f4"/><rect x="6.0" y="5.0" width="4" height="0.900" fill="#e2f4fc"/><rect x="7.0" y="6.2" width="2" height="1" fill="#1a5a9a"/><rect x="10.4" y="5.0" width="4" height="2.800" fill="#a4d8f4"/><rect x="10.4" y="5.0" width="4" height="0.900" fill="#e2f4fc"/><rect x="11.4" y="6.2" width="2" height="1" fill="#1a5a9a"/><rect x="1.6" y="8.3" width="4" height="2.800" fill="#a4d8f4"/><rect x="1.6" y="8.3" width="4" height="0.900" fill="#e2f4fc"/><rect x="2.6" y="9.5" width="2" height="1" fill="#1a5a9a"/><rect x="6.0" y="8.3" width="4" height="2.800" fill="#a4d8f4"/><rect x="6.0" y="8.3" width="4" height="0.900" fill="#e2f4fc"/><rect x="7.0" y="9.5" width="2" height="1" fill="#1a5a9a"/><rect x="10.4" y="8.3" width="4" height="2.800" fill="#a4d8f4"/><rect x="10.4" y="8.3" width="4" height="0.900" fill="#e2f4fc"/><rect x="11.4" y="9.5" width="2" height="1" fill="#1a5a9a"/><rect x="1.6" y="11.6" width="4" height="2.800" fill="#a4d8f4"/><rect x="1.6" y="11.6" width="4" height="0.900" fill="#e2f4fc"/><rect x="2.6" y="12.8" width="2" height="1" fill="#1a5a9a"/><rect x="6.0" y="11.6" width="4" height="2.800" fill="#a4d8f4"/><rect x="6.0" y="11.6" width="4" height="0.900" fill="#e2f4fc"/><rect x="7.0" y="12.8" width="2" height="1" fill="#1a5a9a"/><rect x="10.4" y="11.6" width="4" height="2.800" fill="#a4d8f4"/><rect x="10.4" y="11.6" width="4" height="0.900" fill="#e2f4fc"/><rect x="11.4" y="12.8" width="2" height="1" fill="#1a5a9a"/><rect x="0.500" y="9.500" width="9" height="6" rx="1" fill="#c8241c" stroke="#8c1410" stroke-width="0.600"/><rect x="3.500" y="11" width="3" height="2" fill="#f8e8e8"/></svg>
<span class="t" style="left:57.60000000000002px;top:127px;height:16px;line-height:16px;font-size:11.5px;letter-spacing:-0.403px;transform:scaleX(0.9650);transform-origin:0 50%;">Projects Based Sample</span>
<svg style="left:43.5px;top:149.5px;" width="4" height="7" viewBox="0 0 4 7"><path d="M0 0V7L4 3.5z" fill="#8c8c94"/></svg>
<svg style="left:55.5px;top:147px;" width="15" height="13" viewBox="0 0 15 13"><path d="M0.500 2c0-0.600 0.400-1 1-1h4l1.500 1.500h6.500c0.600 0 1 0.400 1 1v7.500c0 0.600-0.400 1-1 1h-12c-0.600 0-1-0.400-1-1z" fill="#f6e27c" stroke="#b39a2e" stroke-width="1"/><path d="M1.500 5h12v5.500h-12z" fill="#fdf2ac"/></svg>
<span class="t" style="left:75.79999999999995px;top:145px;height:16px;line-height:16px;font-size:11.5px;letter-spacing:-0.392px;">550 Main Street</span>
<svg style="left:43.5px;top:167.5px;" width="4" height="7" viewBox="0 0 4 7"><path d="M0 0V7L4 3.5z" fill="#8c8c94"/></svg>
<svg style="left:55.5px;top:165px;" width="15" height="13" viewBox="0 0 15 13"><path d="M0.500 2c0-0.600 0.400-1 1-1h4l1.500 1.500h6.500c0.600 0 1 0.400 1 1v7.500c0 0.600-0.400 1-1 1h-12c-0.600 0-1-0.400-1-1z" fill="#f6e27c" stroke="#b39a2e" stroke-width="1"/><path d="M1.500 5h12v5.500h-12z" fill="#fdf2ac"/></svg>
<span class="t" style="left:75.79999999999995px;top:163px;height:16px;line-height:16px;font-size:11.5px;letter-spacing:-0.403px;transform:scaleX(0.9894);transform-origin:0 50%;">Component A Redesign</span>
<div style="left:50px;top:178px;width:140px;height:20px;background:#e6ebf6"></div>
<svg style="left:55.5px;top:183px;" width="15" height="13" viewBox="0 0 15 13"><path d="M0.500 2c0-0.600 0.400-1 1-1h4l1.500 1.500h6.500c0.600 0 1 0.400 1 1v7.500c0 0.600-0.400 1-1 1h-12c-0.600 0-1-0.400-1-1z" fill="#f6e27c" stroke="#b39a2e" stroke-width="1"/><path d="M1.500 5h12v5.500h-12z" fill="#fdf2ac"/></svg>
<span class="t" style="left:75.79999999999995px;top:181px;height:16px;line-height:16px;font-size:11.5px;letter-spacing:-0.403px;transform:scaleX(0.9936);transform-origin:0 50%;">Project Bell</span>
<svg style="left:43.5px;top:203.5px;" width="4" height="7" viewBox="0 0 4 7"><path d="M0 0V7L4 3.5z" fill="#8c8c94"/></svg>
<svg style="left:55.5px;top:201px;" width="15" height="13" viewBox="0 0 15 13"><path d="M0.500 2c0-0.600 0.400-1 1-1h4l1.500 1.500h6.500c0.600 0 1 0.400 1 1v7.500c0 0.600-0.400 1-1 1h-12c-0.600 0-1-0.400-1-1z" fill="#f6e27c" stroke="#b39a2e" stroke-width="1"/><path d="M1.500 5h12v5.500h-12z" fill="#fdf2ac"/></svg>
<span class="t" style="left:75.79999999999995px;top:199px;height:16px;line-height:16px;font-size:11.5px;letter-spacing:-0.403px;transform:scaleX(0.9729);transform-origin:0 50%;">Sam Burlington Ad Campaign</span>
</div>
<div style="left:616px;top:485px;width:188px;height:16px;background:#f1f1f3"></div>
<svg style="left:623.5px;top:489.5px;" width="4" height="7" viewBox="0 0 4 7"><path d="M4 0V7L0 3.5z" fill="#7c7c84"/></svg>
<svg style="left:792.5px;top:489.5px;" width="4" height="7" viewBox="0 0 4 7"><path d="M0 0V7L4 3.5z" fill="#7c7c84"/></svg>
<div style="left:633px;top:489px;width:128px;height:8px;border:1px solid #b4b4bc;border-radius:4px;background:linear-gradient(#f4f4f6,#d4d4da)"></div>
<div style="left:807px;top:378px;width:3px;height:12px;background:repeating-linear-gradient(#9a9aa2 0 1px,transparent 1px 2px)"></div>
<div style="left:618px;top:504px;width:187px;height:99px;background:#ececec;border:1px solid #dededf"></div>
<svg style="left:684px;top:511px;" width="44" height="46" viewBox="0 0 44 46"><path d="M26.500 18H39.600V42.100H3.200V26.800" fill="none" stroke="#b6babe" stroke-width="1.300"/><path d="M8.300 3C2.500 10 4 19 13.400 26.800L9 33.400 27.200 31.200 20.700 14.400 17.800 21C12 17 9 11 8.300 3Z" fill="#eceef0" stroke="#b6babe" stroke-width="1.300" stroke-linejoin="round"/></svg>
<span class="t" style="left:670.4px;top:559.8px;height:18px;line-height:18px;font-size:12px;font-weight:bold;color:#adadaf;letter-spacing:0.009px;">DROP ZONE</span>
<span class="t" style="left:655.2px;top:574.8px;height:19px;line-height:19px;font-size:12.5px;color:#a2a2a6;font-style:italic;letter-spacing:-0.438px;transform:scaleX(0.9713);transform-origin:0 50%;">Drop files for autofile</span>
<div style="left:814px;top:165px;width:269px;height:24px;background:linear-gradient(#fff,#f4f4f7);border:1px solid #cdcdd3;border-top:none;border-radius:0 0 4px 4px"></div>
<div style="left:1086px;top:165px;width:15px;height:24px;background:linear-gradient(#fff,#f0f0f3);border:1px solid #cdcdd3;border-top:none;border-radius:0 0 3px 3px"></div>
<svg style="left:1089.0px;top:175.0px;" width="7" height="4" viewBox="0 0 7 4"><path d="M0 0H7L3.5 4z" fill="#9c9ca4"/></svg>
<svg style="left:823px;top:170px;" width="13" height="12" viewBox="0 0 13 12"><path d="M0.800 6L6 1v3h6v4H6v3z" fill="#5cc040" stroke="#37962a" stroke-width="0.800" stroke-linejoin="round"/></svg>
<svg style="left:851px;top:170px;" width="13" height="12" viewBox="0 0 13 12"><path d="M12.200 6L7 1v3H1v4h6v3z" fill="#c4c4c8" stroke="#b0b0b6" stroke-width="0.800" stroke-linejoin="round"/></svg>
<svg style="left:877px;top:167px;" width="16" height="18" viewBox="0 0 16 18"><path d="M1.500 6.500l5-1.500 1.500 1.500h6l-2 9.500-10.500 1.500z" fill="#f4d968" stroke="#b39a2e" stroke-width="0.900"/><path d="M5.500 14c4-1.500 5-4.500 4.500-8h-2.500l4-5 3.500 5h-2c0.500 4.500-2 7.500-7.500 8z" fill="#3cab2e" stroke="#237a1c" stroke-width="0.800" stroke-linejoin="round"/></svg>
<span class="t" style="left:897.5px;top:166.5px;height:18px;line-height:18px;font-size:12px;letter-spacing:-0.339px;">up..</span>
<svg style="left:935px;top:167px;" width="17" height="18" viewBox="0 0 17 18"><rect x="1.500" y="7.500" width="11" height="9" rx="1" fill="#9db9e0" stroke="#4a74b4" stroke-width="1"/><rect x="3" y="11" width="8" height="4" fill="#e8f0fa"/><circle cx="7.500" cy="5.500" r="4" fill="#d6e7f7" stroke="#6a90c4" stroke-width="1.300"/><path d="M4 13.500h6" stroke="#2c3e64" stroke-width="1.200"/><path d="M10.500 11.500L15 16.500" stroke="#b0485c" stroke-width="1.600"/></svg>
<svg style="left:953.5px;top:173.75px;" width="6" height="3.5" viewBox="0 0 6 3.5"><path d="M0 0H6L3.0 3.5z" fill="#202020"/></svg>
<div style="left:960px;top:193px;width:100px;height:23px;background:linear-gradient(90deg,rgba(235,236,240,0) 78%,#ebecf0),linear-gradient(#e9e9ed,#dcdce1 60%,#e2e2e6);border-top:1px solid #bfbfc5"></div>
<span class="t" style="left:967.6px;top:197px;height:16px;line-height:16px;font-size:11.5px;color:#55555f;letter-spacing:-0.403px;transform:scaleX(0.9850);transform-origin:0 50%;">New Tab</span>
<svg style="left:1067.5px;top:199.0px;" width="5" height="8" viewBox="0 0 5 8"><path d="M5 0V8L0 4.0z" fill="#cdcdd4"/></svg>
<svg style="left:1089.5px;top:199.0px;" width="5" height="8" viewBox="0 0 5 8"><path d="M0 0V8L5 4.0z" fill="#7c7c84"/></svg>
<div style="left:812px;top:216px;width:290px;height:231px;background:#fff;border:1px solid #b9b9bf"></div>
<div style="left:815px;top:192px;width:145px;height:26px;background:#fff;border:1px solid #b9b9bf;border-bottom:none;border-radius:3px 3px 0 0"></div>
<svg style="left:825px;top:197px;" width="15" height="13" viewBox="0 0 15 13"><path d="M0.500 2c0-0.600 0.400-1 1-1h4l1.500 1.500h6.500c0.600 0 1 0.400 1 1v7.500c0 0.600-0.400 1-1 1h-12c-0.600 0-1-0.400-1-1z" fill="#f6e27c" stroke="#b39a2e" stroke-width="1"/><path d="M1.500 5h12v5.500h-12z" fill="#fdf2ac"/></svg>
<span class="t" style="left:843.5px;top:196px;height:16px;line-height:16px;font-size:11.5px;letter-spacing:-0.403px;transform:scaleX(0.9806);transform-origin:0 50%;">Project Bell</span>
<svg style="left:944px;top:201px;" width="10" height="8" viewBox="0 0 10 8"><path d="M1.500 1L8.500 7M8.500 1L1.500 7" stroke="#7c7c86" stroke-width="2"/></svg>
<div style="left:813px;top:217px;width:288px;height:18px;background:linear-gradient(#fdfdfe,#ececf0)"></div>
<div style="left:837px;top:218px;width:1px;height:17px;background:#d0d0d6"></div>
<div style="left:857px;top:218px;width:1px;height:17px;background:#d0d0d6"></div>
<div style="left:987px;top:218px;width:1px;height:17px;background:#d0d0d6"></div>
<span class="t" style="left:861.9px;top:218px;height:16px;line-height:16px;font-size:11.5px;letter-spacing:-0.403px;transform:scaleX(0.8887);transform-origin:0 50%;">Name</span>
<svg style="left:975px;top:223.5px;" width="7" height="4" viewBox="0 0 7 4"><path d="M0 4H7L3.500 0z" fill="#202020"/></svg>
<span class="t" style="left:991.5px;top:218px;height:16px;line-height:16px;font-size:11.5px;letter-spacing:-0.403px;transform:scaleX(0.9868);transform-origin:0 50%;">Description</span>
<div style="left:812px;top:236px;width:290px;height:23px;background:#dfe6f6"></div>
<div style="left:810px;top:235px;width:294px;height:26px;border:2px solid #e07b26"></div>
<svg style="left:815px;top:239px;" width="16" height="17" viewBox="0 0 16 17"><path d="M3.5 1.5h8l3 3v11h-11z" fill="#fff" stroke="#8c8c90" stroke-width="1"/><path d="M11.5 1.5v3h3" fill="#e8e8ec" stroke="#8c8c90" stroke-width="1"/><rect x="0" y="1.500" width="10.500" height="4.500" fill="#d8151c"/><rect x="0" y="5" width="10.500" height="1" fill="#a80f14"/><path d="M1.5 4.5c1.5-1.5 2.5 0.5 4-0.5s2-0.5 3 0" stroke="#fff" stroke-width="0.8" fill="none"/><path d="M5 14c1.5-1.5 2.8-4 3-6.5c0.1-1 1-1 1 0c0 2.5 1.5 4.5 4 5c0.8 0.2 0.6 1-0.2 0.8c-2.5-0.6-5-0.4-7.300 1.300c-0.800 0.600-1.200 0-0.500-0.600z" fill="none" stroke="#d8151c" stroke-width="1"/></svg>
<span class="t" style="left:862px;top:239px;height:16px;line-height:16px;font-size:11.5px;letter-spacing:-0.403px;transform:scaleX(0.9904);transform-origin:0 50%;">20170601-ACME.pdf</span>
<span class="t" style="left:991.5px;top:239px;height:16px;line-height:16px;font-size:11.5px;letter-spacing:-0.210px;">Contract</span>
<div style="left:813px;top:430px;width:288px;height:16px;background:#f1f1f3"></div>
<svg style="left:820.5px;top:434.5px;" width="4" height="7" viewBox="0 0 4 7"><path d="M4 0V7L0 3.5z" fill="#7c7c84"/></svg>
<svg style="left:1089.5px;top:434.5px;" width="4" height="7" viewBox="0 0 4 7"><path d="M0 0V7L4 3.5z" fill="#7c7c84"/></svg>
<div style="left:830px;top:434px;width:93px;height:8px;border:1px solid #b4b4bc;border-radius:4px;background:linear-gradient(#f4f4f6,#d4d4da)"></div>
<div style="left:950px;top:449px;width:13px;height:2px;background:repeating-linear-gradient(90deg,#9a9aa2 0 1px,transparent 1px 2px)"></div>
<div style="left:812px;top:476px;width:290px;height:127px;background:#fff;border:1px solid #b9b9bf"></div>
<div style="left:871px;top:456px;width:53px;height:20px;background:linear-gradient(#ebebef,#dcdce2);border:1px solid #b9b9bf"></div>
<div style="left:924px;top:456px;width:116px;height:20px;background:linear-gradient(90deg,transparent 111px,#ebecf0 111px),linear-gradient(#ebebef,#dcdce2);border:1px solid #b9b9bf;border-right:none"></div>
<div style="left:1035px;top:457px;width:1px;height:18px;background:#b9b9bf"></div>
<div style="left:816px;top:453px;width:56px;height:25px;background:#fff;border:1px solid #b9b9bf;border-bottom:none;border-radius:3px 3px 0 0"></div>
<span class="t" style="left:824.8px;top:456.8px;height:16px;line-height:16px;font-size:11.5px;letter-spacing:-0.403px;transform:scaleX(0.9531);transform-origin:0 50%;">General</span>
<span class="t" style="left:879.7px;top:457.7px;height:16px;line-height:16px;font-size:11.5px;color:#55555f;letter-spacing:-0.403px;transform:scaleX(0.9682);transform-origin:0 50%;">Version</span>
<span class="t" style="left:932.4px;top:457.7px;height:16px;line-height:16px;font-size:11.5px;color:#55555f;letter-spacing:-0.403px;transform:scaleX(0.9835);transform-origin:0 50%;">Related Documents</span>
<svg style="left:1047.0px;top:459.5px;" width="4" height="8" viewBox="0 0 4 8"><path d="M4 0V8L0 4.0z" fill="#c8c8cf"/></svg>
<svg style="left:1068.0px;top:459.5px;" width="4" height="8" viewBox="0 0 4 8"><path d="M0 0V8L4 4.0z" fill="#808088"/></svg>
<svg style="left:1086px;top:459.5px;" width="10" height="8" viewBox="0 0 10 8"><path d="M1.500 1L8.500 7M8.500 1L1.500 7" stroke="#808088" stroke-width="2"/></svg>
<div style="left:813px;top:477px;width:288px;height:108px;overflow:hidden">
<span class="t" style="left:8.200000000000045px;top:0px;height:18px;line-height:18px;font-size:12px;font-weight:bold;color:#16161c;transform:scaleX(0.9530);transform-origin:0 50%;">Owner:</span>
<span class="t" style="left:56px;top:1px;height:16px;line-height:16px;font-size:11.5px;letter-spacing:-0.403px;transform:scaleX(0.9194);transform-origin:0 50%;">Admin</span>
<span class="t" style="left:8.200000000000045px;top:24px;height:18px;line-height:18px;font-size:12px;font-weight:bold;color:#16161c;">System ID:</span>
<span class="t" style="left:87.60000000000002px;top:25px;height:16px;line-height:16px;font-size:11.5px;letter-spacing:-0.403px;transform:scaleX(0.9677);transform-origin:0 50%;">FL00000002</span>
<span class="t" style="left:8.200000000000045px;top:44.6px;height:18px;line-height:18px;font-size:12px;font-weight:bold;color:#16161c;transform:scaleX(0.9526);transform-origin:0 50%;">Doc. Status:</span>
<span class="t" style="left:8.200000000000045px;top:66.7px;height:18px;line-height:18px;font-size:12px;font-weight:bold;color:#16161c;transform:scaleX(0.9692);transform-origin:0 50%;">Workflow:</span>
<span class="t" style="left:231.20000000000005px;top:3px;height:18px;line-height:18px;font-size:12px;font-weight:bold;color:#16161c;transform:scaleX(0.9178);transform-origin:0 50%;">Desc:</span>
<span class="t" style="left:277.29999999999995px;top:4px;height:16px;line-height:16px;font-size:11.5px;letter-spacing:-0.210px;">Contract</span>
<span class="t" style="left:231.20000000000005px;top:24px;height:18px;line-height:18px;font-size:12px;font-weight:bold;color:#16161c;transform:scaleX(1.0459);transform-origin:0 50%;">Ver. #:</span>
<span class="t" style="left:273.4000000000001px;top:25px;height:16px;line-height:16px;font-size:11.5px;">2</span>
<span class="t" style="left:231.20000000000005px;top:67px;height:18px;line-height:18px;font-size:12px;font-weight:bold;color:#16161c;transform:scaleX(0.9339);transform-origin:0 50%;">OCR Status:</span>
<span class="t" style="left:231.20000000000005px;top:86.4px;height:18px;line-height:18px;font-size:12px;font-weight:bold;color:#16161c;transform:scaleX(0.9858);transform-origin:0 50%;">Signature:</span>
</div>
<div style="left:813px;top:585px;width:288px;height:16px;background:#f1f1f3"></div>
<svg style="left:820.5px;top:589.5px;" width="4" height="7" viewBox="0 0 4 7"><path d="M4 0V7L0 3.5z" fill="#7c7c84"/></svg>
<svg style="left:1089.5px;top:589.5px;" width="4" height="7" viewBox="0 0 4 7"><path d="M0 0V7L4 3.5z" fill="#7c7c84"/></svg>
<div style="left:830px;top:589px;width:146px;height:8px;border:1px solid #b4b4bc;border-radius:4px;background:linear-gradient(#f4f4f6,#d4d4da)"></div>
<div style="left:1108px;top:164px;width:164px;height:285px;border:2px solid #e99c5c"></div>
<div style="left:1110px;top:166px;width:158px;height:148px;background:#fff;border:1px solid #cacad0"></div>
<div style="left:1111px;top:167px;width:156px;height:21px;background:linear-gradient(#f1f1f5,#e2e2e8)"></div>
<span class="t" style="left:1121.5px;top:168.2px;height:19px;line-height:19px;font-size:12.5px;font-weight:bold;color:#1c1e3a;transform:scaleX(1.0796);transform-origin:0 50%;">Profile: Project</span>
<svg style="left:1231px;top:169px;" width="15" height="15" viewBox="0 0 15 15"><rect x="0.500" y="4.500" width="12" height="9" fill="#f2da58" stroke="#8c7a24"/><path d="M2.500 7.500h5M2.500 10.500h8" stroke="#7c6a1c" stroke-width="1"/><path d="M6 10l1-3 6.500-7 1.500 1.500-6.500 7z" fill="#44a834" stroke="#286a1c" stroke-width="0.700"/></svg>
<svg style="left:1249px;top:169.5px;" width="14" height="14" viewBox="0 0 14 14"><defs><linearGradient id="cr169" x1="0" y1="0" x2="0" y2="1"><stop offset="0" stop-color="#dc4a4a"/><stop offset="1" stop-color="#a81616"/></linearGradient></defs><rect x="0.500" y="0.500" width="13" height="13" rx="3" fill="url(#cr169)" stroke="#8c1818"/><path d="M4 4L10 10M10 4L4 10" stroke="#fff" stroke-width="2.400" stroke-linecap="round"/></svg>
<div style="left:1111px;top:189px;width:156px;height:19px;background:#f3f1f8;border-bottom:1px solid #dcdce6"></div>
<span class="t" style="left:1114.6px;top:190px;height:16px;line-height:16px;font-size:11.5px;letter-spacing:-0.403px;transform:scaleX(0.9710);transform-origin:0 50%;">Client</span>
<span class="t" style="left:1178.7px;top:190px;height:16px;line-height:16px;font-size:11.5px;letter-spacing:-0.403px;transform:scaleX(0.8618);transform-origin:0 50%;">ACME</span>
<div style="left:1111px;top:208px;width:156px;height:19px;background:#fff;border-bottom:1px solid #dcdce6"></div>
<span class="t" style="left:1114.6px;top:209px;height:16px;line-height:16px;font-size:11.5px;letter-spacing:-0.299px;">Project</span>
<span class="t" style="left:1178.7px;top:209px;height:16px;line-height:16px;font-size:11.5px;letter-spacing:-0.403px;transform:scaleX(0.9824);transform-origin:0 50%;">Project Bell</span>
<div style="left:1111px;top:227px;width:156px;height:19px;background:#f3f1f8;border-bottom:1px solid #dcdce6"></div>
<span class="t" style="left:1114.6px;top:228px;height:16px;line-height:16px;font-size:11.5px;letter-spacing:-0.390px;">Documen...</span>
<span class="t" style="left:1178.7px;top:228px;height:16px;line-height:16px;font-size:11.5px;letter-spacing:-0.253px;">Contract</span>
<div style="left:1111px;top:246px;width:156px;height:19px;background:#fff;border-bottom:1px solid #dcdce6"></div>
<span class="t" style="left:1114.6px;top:247px;height:16px;line-height:16px;font-size:11.5px;letter-spacing:-0.403px;transform:scaleX(0.9656);transform-origin:0 50%;">Due Date</span>
<span class="t" style="left:1178.7px;top:247px;height:16px;line-height:16px;font-size:11.5px;letter-spacing:-0.184px;">6/30/2017</span>
<div style="left:1182px;top:315px;width:13px;height:2px;background:repeating-linear-gradient(90deg,#9a9aa2 0 1px,transparent 1px 2px)"></div>
<div style="left:1110px;top:319px;width:158px;height:128px;background:#ffffe1;border:1px solid #cacad0"></div>
<div style="left:1111px;top:320px;width:156px;height:22px;background:linear-gradient(#f1f1f5,#e2e2e8)"></div>
<span class="t" style="left:1121.5px;top:321.8px;height:19px;line-height:19px;font-size:12.5px;font-weight:bold;color:#1c1e3a;transform:scaleX(1.0541);transform-origin:0 50%;">Document Notes</span>
<svg style="left:1231px;top:324px;" width="14" height="14" viewBox="0 0 15 15"><rect x="0.500" y="0.500" width="14" height="14" fill="#fdf6c0" stroke="#c4a62c"/><rect x="7.500" y="7.500" width="7" height="7" fill="#f4d44c" stroke="#c4a62c"/><path d="M2.500 6V2.500H6M2.500 2.500L6.500 6.500" stroke="#b08c1c" stroke-width="1" fill="none"/></svg>
<svg style="left:1249px;top:323.5px;" width="14" height="14" viewBox="0 0 14 14"><defs><linearGradient id="cr323" x1="0" y1="0" x2="0" y2="1"><stop offset="0" stop-color="#dc4a4a"/><stop offset="1" stop-color="#a81616"/></linearGradient></defs><rect x="0.500" y="0.500" width="13" height="13" rx="3" fill="url(#cr323)" stroke="#8c1818"/><path d="M4 4L10 10M10 4L4 10" stroke="#fff" stroke-width="2.400" stroke-linecap="round"/></svg>
<span class="t" style="left:1112px;top:341px;height:16px;line-height:16px;font-size:11.5px;letter-spacing:-0.403px;transform:scaleX(0.9878);transform-origin:0 50%;">Jun  1 2017  7:04PM by Admin</span>
<span class="t" style="left:1112px;top:354px;height:16px;line-height:16px;font-size:11.5px;letter-spacing:-0.146px;">6/30/2017</span>
<div style="left:1104px;top:380px;width:3px;height:12px;background:repeating-linear-gradient(#9a9aa2 0 1px,transparent 1px 2px)"></div>
<div style="left:1182px;top:450px;width:13px;height:2px;background:repeating-linear-gradient(90deg,#9a9aa2 0 1px,transparent 1px 2px)"></div>
<div style="left:1110px;top:454px;width:158px;height:148px;background:#fff;border:1px solid #d0d0d6"></div>
<div style="left:1111px;top:455px;width:156px;height:22px;background:linear-gradient(#f1f1f5,#e2e2e8)"></div>
<div style="left:1111px;top:477px;width:156px;height:21px;background:#ebebef"></div>
<span class="t" style="left:1121.5px;top:455.5px;height:19px;line-height:19px;font-size:12.5px;font-weight:bold;color:#1c1e3a;transform:scaleX(1.0493);transform-origin:0 50%;">Document Tasks</span>
<svg style="left:1249px;top:456.5px;" width="14" height="14" viewBox="0 0 14 14"><defs><linearGradient id="cr456" x1="0" y1="0" x2="0" y2="1"><stop offset="0" stop-color="#dc4a4a"/><stop offset="1" stop-color="#a81616"/></linearGradient></defs><rect x="0.500" y="0.500" width="13" height="13" rx="3" fill="url(#cr456)" stroke="#8c1818"/><path d="M4 4L10 10M10 4L4 10" stroke="#fff" stroke-width="2.400" stroke-linecap="round"/></svg>
<svg style="left:1116px;top:480px;" width="16" height="14" viewBox="0 0 16 14"><path d="M0.500 3.500l2.500-3h5l1.500 2h6v11h-15z" fill="#d4eafc" stroke="#2c74b4"/><path d="M5.500 7.500h2M9 7.500h4.500M5.500 10h2M9 10h4.500" stroke="#2c74b4" stroke-width="1.200"/><path d="M2.500 12.500h11" stroke="#2c74b4" stroke-width="0.800"/><path d="M3.500 0v7M0 3.500h7" stroke="#0f6a0f" stroke-width="3.400"/><path d="M3.500 0.800v5.400M0.800 3.500h5.400" stroke="#46c246" stroke-width="1.600"/></svg>
<svg style="left:1140px;top:480px;" width="16" height="14" viewBox="0 0 16 14"><path d="M0.500 3.500l2.500-3h5l1.500 2h6v11h-15z" fill="#e1e1e3" stroke="#a2a2a6"/><path d="M5.500 7.500h2M9 7.500h4.500M5.500 10h2M9 10h4.500" stroke="#a2a2a6" stroke-width="1.200"/><path d="M2.500 12.500h11" stroke="#a2a2a6" stroke-width="0.800"/><path d="M1.500 7.500l4 6" stroke="#8c8c90" stroke-width="1.200"/></svg>
<svg style="left:1164px;top:480px;" width="16" height="14" viewBox="0 0 16 14"><path d="M0.500 3.500l2.500-3h5l1.500 2h6v11h-15z" fill="#e1e1e3" stroke="#a2a2a6"/><path d="M5.500 7.500h2M9 7.500h4.500M5.500 10h2M9 10h4.500" stroke="#a2a2a6" stroke-width="1.200"/><path d="M2.500 12.500h11" stroke="#a2a2a6" stroke-width="0.800"/><path d="M2.500 2.500l3 3M5.500 2.500l-3 3" stroke="#8c8c90" stroke-width="1.100"/></svg>
<svg style="left:1188px;top:480px;" width="16" height="14" viewBox="0 0 16 14"><path d="M0.500 3.500l2.500-3h5l1.500 2h6v11h-15z" fill="#e1e1e3" stroke="#a2a2a6"/><path d="M5.500 7.500h2M9 7.500h4.500M5.500 10h2M9 10h4.500" stroke="#a2a2a6" stroke-width="1.200"/><path d="M2.500 12.500h11" stroke="#a2a2a6" stroke-width="0.800"/><path d="M4 3.500v3.500M4 8v1.500" stroke="#8c8c90" stroke-width="1.300"/></svg>
<svg style="left:1212px;top:480px;" width="16" height="14" viewBox="0 0 16 14"><path d="M0.500 3.500l2.500-3h5l1.500 2h6v11h-15z" fill="#e1e1e3" stroke="#a2a2a6"/><path d="M5.500 7.500h2M9 7.500h4.500M5.500 10h2M9 10h4.500" stroke="#a2a2a6" stroke-width="1.200"/><path d="M2.500 12.500h11" stroke="#a2a2a6" stroke-width="0.800"/><path d="M1.500 3l2.500 3 5-5.500" stroke="#8c8c90" stroke-width="1.300" fill="none"/></svg>
<div style="left:665px;top:371px;width:149px;height:22px;border:2px solid #e2823a"></div>
<svg style="left:0px;top:0px;pointer-events:none" width="1278" height="617" viewBox="0 0 1278 617"><path d="M214 140.500H58.500V361.500H196" fill="none" stroke="#b42828" stroke-width="1"/><path d="M58.500 308.500H196M58.500 338.500H196" fill="none" stroke="#b42828" stroke-width="1"/><path d="M196 304L207.600 308.500 196 313zM194.200 334L205.800 338.500 194.200 343zM193.300 357L205 361.500 193.300 366z" fill="#e01414"/><circle cx="399" cy="139.500" r="3.300" fill="#d41414"/><path d="M399 139.500L686 371" stroke="#b42828" stroke-width="0.900" fill="none"/><path d="M795 392H828" stroke="#a01818" stroke-width="2"/><path d="M824.500 385L845.500 392 824.500 399.500z" fill="#e01010"/></svg>
<span class="t" style="left:61px;top:287.7px;height:20px;line-height:20px;font-size:13.33px;font-weight:bold;color:#2e8b57;font-family:'Liberation Mono', monospace;letter-spacing:-0.048px;">&lt;YYYYMMDD&gt;-&lt;&lt;Client&gt;&gt;</span>
<span class="t" style="left:59px;top:316px;height:20px;line-height:20px;font-size:13.33px;font-weight:bold;color:#2e8b57;font-family:'Liberation Mono', monospace;letter-spacing:-0.062px;">&lt;&lt;Document type&gt;&gt;</span>
<span class="t" style="left:61px;top:343.3px;height:20px;line-height:20px;font-size:13.33px;font-weight:bold;color:#2e8b57;font-family:'Liberation Mono', monospace;">&lt;&lt;Due Date&gt;&gt;</span>
<span class="t" style="left:851px;top:380.3px;height:20px;line-height:20px;font-size:13.33px;font-weight:bold;color:#2e8b57;font-family:'Liberation Mono', monospace;letter-spacing:0.024px;">Dynamic Folder</span></body></html>
